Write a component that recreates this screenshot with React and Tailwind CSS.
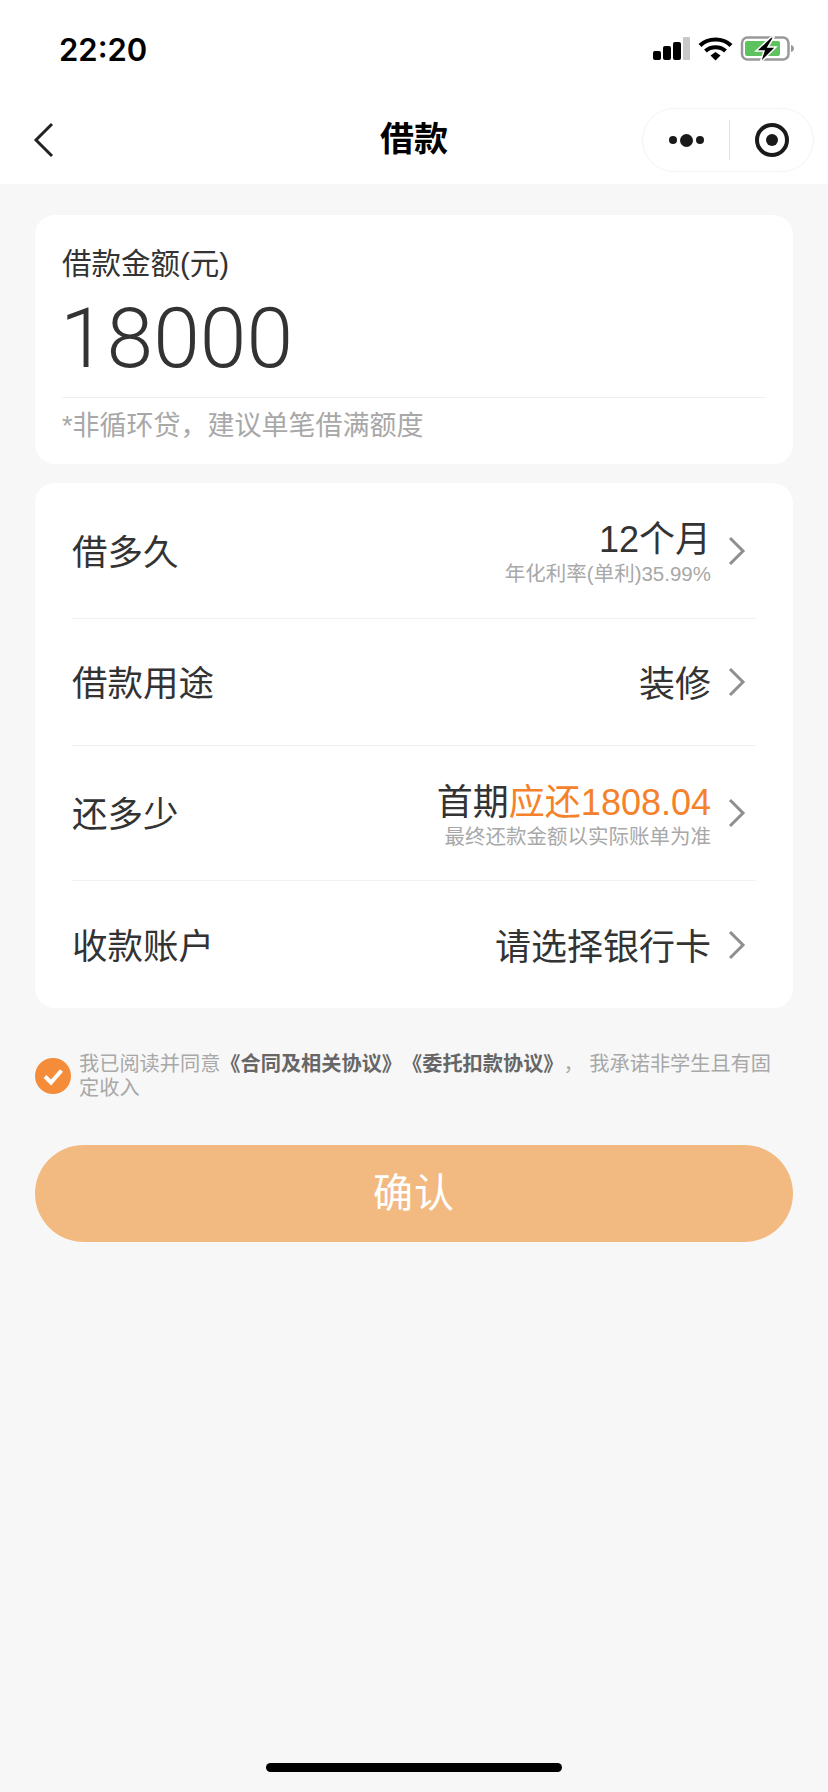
const F = { fontFamily: '"Liberation Sans","Noto Sans CJK SC",sans-serif' };

function Chevron() {
  return (
    <svg width="18" height="30" viewBox="0 0 18 30" className="-mt-[6px] shrink-0" fill="none">
      <path d="M2 2l13 13L2 28" stroke="#8f8f8f" strokeWidth="3" />
    </svg>
  );
}

function Row({ label, value, sub, h, border = true }) {
  return (
    <div className={`mx-[37px] flex items-center justify-between pt-[6px] ${h} ${border ? "border-b border-[#f1f1f1]" : ""}`}>
      <span className="text-[35.5px] leading-none text-[#333]">{label}</span>
      <div className="mr-[10px] flex items-center gap-[17px]">
        <div className="flex flex-col items-end">
          <div className="text-[36px] leading-[38px] text-[#333]">{value}</div>
          {sub && <div className="mt-[2px] text-[20.5px] leading-[25px] text-[#a8a8a8]">{sub}</div>}
        </div>
        <Chevron />
      </div>
    </div>
  );
}

export default function App() {
  return (
    <div style={F} className="flex h-[1792px] w-[828px] flex-col overflow-hidden bg-[#f7f7f7]">
      <div className="bg-white">
        <div className="flex h-[100px] items-start justify-between pl-[59px] pr-[33px] pt-[30px]">
          <span style={{ fontFamily: "Inter, sans-serif" }} className="text-[31px] font-semibold leading-[40px] text-black">22:20</span>
          <div className="flex items-center pt-[6px]">
            <svg width="142" height="28" viewBox="0 0 142 28">
              <rect x="0" y="15" width="8" height="9" rx="2" fill="#000" />
              <rect x="10" y="10" width="8" height="14" rx="2" fill="#000" />
              <rect x="20" y="6" width="8" height="18" rx="2" fill="#000" />
              <rect x="30" y="1" width="7" height="23" rx="1" fill="#c8c8c8" />
              <path d="M47 9.5C55 1.5 70 1.5 78 9.5" stroke="#000" strokeWidth="4.2" fill="none" />
              <path d="M52.5 15C58 10 67 10 72.5 15" stroke="#000" strokeWidth="4.2" fill="none" />
              <path d="M57.5 19.5l5-3.5 5 3.5-5 5z" fill="#000" />
              <rect x="89" y="1.5" width="46.5" height="22" rx="5.500" fill="none" stroke="#999" strokeWidth="2.500" />
              <rect x="92" y="5" width="35" height="15" rx="2" fill="#5ec25f" />
              <path d="M138 9c2 .5 3 2 3 3.500s-1 3-3 3.500z" fill="#999" />
              <path d="M118 1L103 15h8l-4 12 16-16h-8l6-10z" fill="#000" stroke="#fff" strokeWidth="1.500" />
            </svg>
          </div>
        </div>
        <div className="relative flex h-[84px] items-center justify-center pb-[7px]">
          <svg className="absolute left-[33px] top-[22px]" width="22" height="36" viewBox="0 0 22 36" fill="none">
            <path d="M19 2L3 18l16 16" stroke="#222" strokeWidth="3" />
          </svg>
          <span className="text-[34px] font-bold leading-none text-black">借款</span>
          <div className="absolute left-[642px] top-[8px] flex h-[64px] w-[172px] items-center rounded-full border border-[#f3f3f3]">
            <div className="flex w-[86px] items-center justify-center gap-[3px]">
              <span className="h-[8px] w-[8px] rounded-full bg-[#1a1a1a]" />
              <span className="h-[13px] w-[13px] rounded-full bg-[#1a1a1a]" />
              <span className="h-[8px] w-[8px] rounded-full bg-[#1a1a1a]" />
            </div>
            <div className="h-[40px] w-px bg-[#e3e3e3]" />
            <div className="flex flex-1 items-center justify-center">
              <span className="flex h-[34px] w-[34px] items-center justify-center rounded-full border-[4px] border-[#1a1a1a]">
                <span className="h-[12px] w-[12px] rounded-full bg-[#1a1a1a]" />
              </span>
            </div>
          </div>
        </div>
      </div>

      <section className="mx-[35px] mt-[31px] h-[249px] rounded-[20px] bg-white px-[27px] pt-[29px]">
        <div className="text-[29.500px] leading-[40px] text-[#333]">借款金额(元)</div>
        <div style={{ fontFamily: 'Roboto,sans-serif' }} className="h-[114px] border-b border-[#efefef] text-[84px] font-light leading-[110px] text-[#333]"><span className="-ml-[2px] inline-block">18000</span></div>
        <div className="mt-[8px] text-[27px] leading-[40px] text-[#a8a8a8]">*非循环贷，建议单笔借满额度</div>
      </section>

      <section className="mx-[35px] mt-[19px] rounded-[20px] bg-white">
        <Row h="h-[136px]" label="借多久" value="12个月" sub="年化利率(单利)35.99%" />
        <Row h="h-[127px]" label="借款用途" value="装修" />
        <Row h="h-[135px]" label="还多少" value={<>首期<span className="text-[#f5822a]">应还1808.04</span></>} sub="最终还款金额以实际账单为准" />
        <Row h="h-[127px]" label="收款账户" value="请选择银行卡" border={false} />
      </section>

      <div className="ml-[35px] mr-[52px] mt-[44px] flex items-center gap-[8px]">
        <svg width="36" height="36" viewBox="0 0 36 36" className="shrink-0">
          <circle cx="18" cy="18" r="18" fill="#f48c3a" />
          <path d="M10 18.500l6 6L26.500 12.500" stroke="#fff" strokeWidth="4" fill="none" />
        </svg>
        <p className="text-[20.2px] leading-[24px] text-[#a8a8a8] [text-spacing-trim:space-all]">
          我已阅读并同意<b className="font-bold text-[#666]">《合同及相关协议》《委托扣款协议》</b>， 我承诺非学生且有固定收入
        </p>
      </div>

      <button className="mx-[35px] mt-[45px] flex h-[97px] items-center justify-center rounded-full bg-[#f2ba80] pb-[1px] text-[40px] tracking-[1px] text-white">确认</button>

      <div className="mt-auto mb-[20px] h-[9px] w-[296px] self-center rounded-full bg-black" />
    </div>
  );
}
